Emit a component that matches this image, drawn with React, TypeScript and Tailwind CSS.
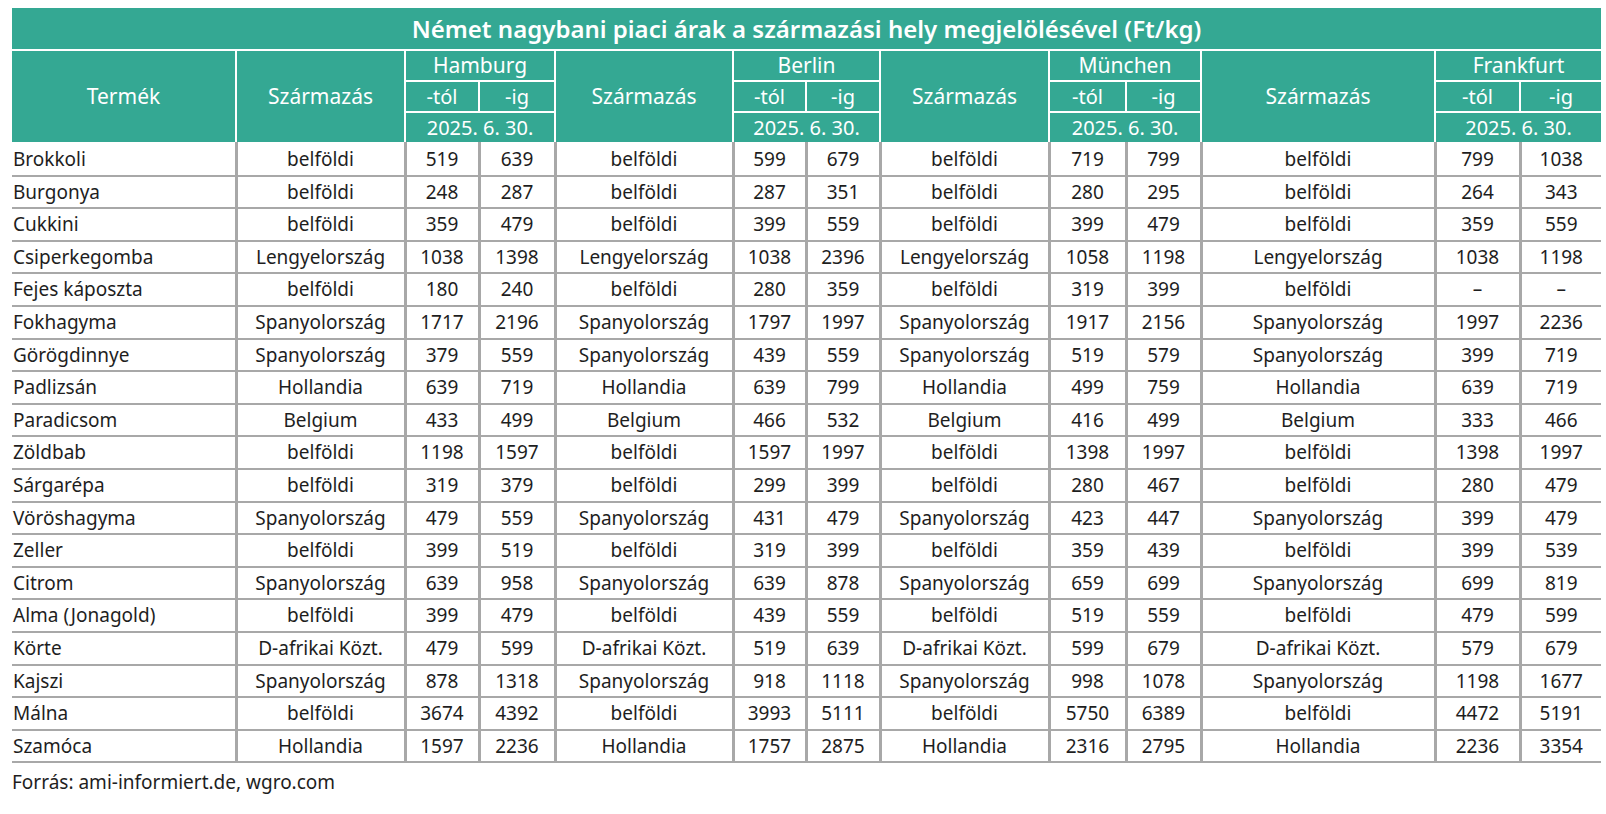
import React from 'react';

type Row = {
  name: string;
  cities: [string, string, string][];
};

const mk = (name: string, c: string, vals: string[], c4?: string): Row => ({
  name,
  cities: [
    [c, vals[0], vals[1]],
    [c, vals[2], vals[3]],
    [c, vals[4], vals[5]],
    [c4 ?? c, vals[6], vals[7]],
  ],
});

const rows: Row[] = [
  mk('Brokkoli', 'belföldi', ['519', '639', '599', '679', '719', '799', '799', '1038']),
  mk('Burgonya', 'belföldi', ['248', '287', '287', '351', '280', '295', '264', '343']),
  mk('Cukkini', 'belföldi', ['359', '479', '399', '559', '399', '479', '359', '559']),
  mk('Csiperkegomba', 'Lengyelország', ['1038', '1398', '1038', '2396', '1058', '1198', '1038', '1198']),
  mk('Fejes káposzta', 'belföldi', ['180', '240', '280', '359', '319', '399', '–', '–']),
  mk('Fokhagyma', 'Spanyolország', ['1717', '2196', '1797', '1997', '1917', '2156', '1997', '2236']),
  mk('Görögdinnye', 'Spanyolország', ['379', '559', '439', '559', '519', '579', '399', '719']),
  mk('Padlizsán', 'Hollandia', ['639', '719', '639', '799', '499', '759', '639', '719']),
  mk('Paradicsom', 'Belgium', ['433', '499', '466', '532', '416', '499', '333', '466']),
  mk('Zöldbab', 'belföldi', ['1198', '1597', '1597', '1997', '1398', '1997', '1398', '1997']),
  mk('Sárgarépa', 'belföldi', ['319', '379', '299', '399', '280', '467', '280', '479']),
  mk('Vöröshagyma', 'Spanyolország', ['479', '559', '431', '479', '423', '447', '399', '479']),
  mk('Zeller', 'belföldi', ['399', '519', '319', '399', '359', '439', '399', '539']),
  mk('Citrom', 'Spanyolország', ['639', '958', '639', '878', '659', '699', '699', '819']),
  mk('Alma (Jonagold)', 'belföldi', ['399', '479', '439', '559', '519', '559', '479', '599']),
  mk('Körte', 'D-afrikai Közt.', ['479', '599', '519', '639', '599', '679', '579', '679']),
  mk('Kajszi', 'Spanyolország', ['878', '1318', '918', '1118', '998', '1078', '1198', '1677']),
  mk('Málna', 'belföldi', ['3674', '4392', '3993', '5111', '5750', '6389', '4472', '5191']),
  mk('Szamóca', 'Hollandia', ['1597', '2236', '1757', '2875', '2316', '2795', '2236', '3354']),
];

const cities = ['Hamburg', 'Berlin', 'München', 'Frankfurt'];
const origWidths = ['w-[169px]', 'w-[178px]', 'w-[169px]', 'w-[234px]'];
const fromWidths = ['w-[74px]', 'w-[73px]', 'w-[77px]', 'w-[85px]'];
const toWidths = ['w-[76px]', 'w-[74px]', 'w-[75px]', 'w-[81px]'];

const th = 'bg-[#34a893] text-white font-normal border-2 border-white p-0 leading-none';
const td = 'border-x-[3px] border-b-2 border-[#a8a8a8] text-center p-0';

export default function App() {
  return (
    <div className="bg-white w-[1606px] h-[814px] pl-3 pt-2 font-['Noto_Sans',sans-serif] [font-stretch:87.5%] text-[#1e1e1e]">
      <table className="table-fixed border-collapse w-[1587px]">
        <colgroup>
          <col className="w-[224px]" />
          {cities.map((c, i) => (
            <React.Fragment key={c}>
              <col className={origWidths[i]} />
              <col className={fromWidths[i]} />
              <col className={toWidths[i]} />
            </React.Fragment>
          ))}
        </colgroup>
        <thead>
          <tr>
            <th colSpan={13} className={`${th} border-t-0 border-x-0 h-[42px] text-[24px] font-semibold`}>
              Német nagybani piaci árak a származási hely megjelölésével (Ft/kg)
            </th>
          </tr>
          <tr className="h-[31px]">
            <th rowSpan={3} className={`${th} border-l-0 text-[21px]`}>Termék</th>
            {cities.map((c, i) => (
              <React.Fragment key={c}>
                <th rowSpan={3} className={`${th} text-[21px]`}>Származás</th>
                <th colSpan={2} className={`${th} text-[21px] ${i === 3 ? 'border-r-0' : ''}`}>{c}</th>
              </React.Fragment>
            ))}
          </tr>
          <tr className="h-[31px]">
            {cities.map((c, i) => (
              <React.Fragment key={c}>
                <th className={`${th} text-[20px]`}>-tól</th>
                <th className={`${th} text-[20px] ${i === 3 ? 'border-r-0' : ''}`}>-ig</th>
              </React.Fragment>
            ))}
          </tr>
          <tr className="h-[31px]">
            {cities.map((c, i) => (
              <th key={c} colSpan={2} className={`${th} text-[20px] ${i === 3 ? 'border-r-0' : ''}`}>
                2025. 6. 30.
              </th>
            ))}
          </tr>
        </thead>
        <tbody className="text-[19px]">
          {rows.map((r) => (
            <tr key={r.name} className="h-[32.6px]">
              <td className="border-b-2 border-r-[3px] border-[#a8a8a8] text-left p-0 pl-px">{r.name}</td>
              {r.cities.map((c, i) => (
                <React.Fragment key={i}>
                  <td className={td}>{c[0]}</td>
                  <td className={td}>{c[1]}</td>
                  <td className={`${td} ${i === 3 ? 'border-r-0' : ''}`}>{c[2]}</td>
                </React.Fragment>
              ))}
            </tr>
          ))}
        </tbody>
      </table>
      <div className="text-[19px] mt-[5px]">Forrás: ami-informiert.de, wgro.com</div>
    </div>
  );
}
